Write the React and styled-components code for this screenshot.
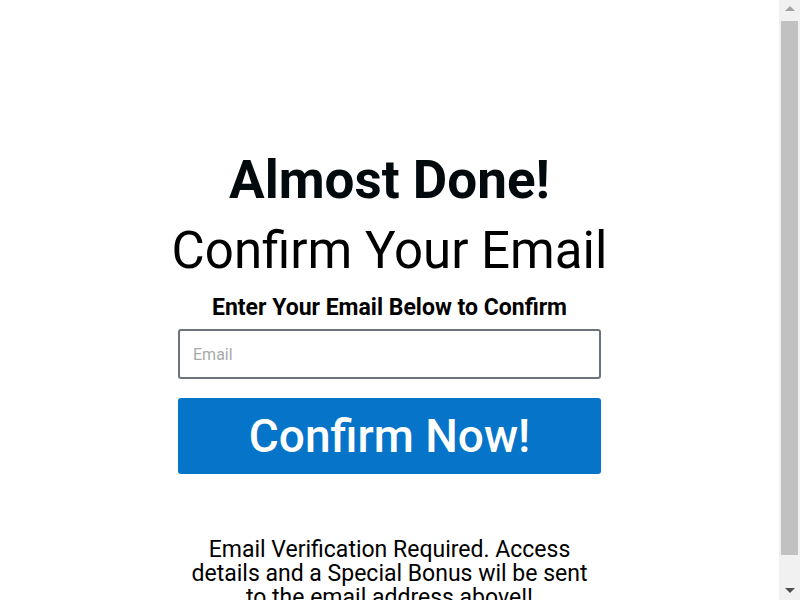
import styled, { createGlobalStyle } from "styled-components";

const Global = createGlobalStyle`
  html, body {
    margin: 0;
    padding: 0;
    background: #fff;
  }
  body {
    font-family: Roboto, "Liberation Sans", sans-serif;
    color: #000;
  }
`;

const Page = styled.main`
  display: flex;
  flex-direction: column;
  align-items: center;
  padding: 150px 21px 27px 0;
`;

const Box = styled.div`
  width: 423px;
  display: flex;
  flex-direction: column;
  align-items: center;
`;

const Title = styled.h1`
  margin: 0;
  font-size: 53px;
  font-weight: 700;
  line-height: 60px;
  color: #030a0d;
  text-align: center;
  white-space: nowrap;
`;

const Subtitle = styled.h2`
  margin: 11px 0 0;
  font-size: 51px;
  font-weight: 400;
  line-height: 60px;
  color: #000;
  text-align: center;
  white-space: nowrap;
`;

const Lead = styled.p`
  margin: 13px 0 0;
  font-size: 23px;
  font-weight: 700;
  line-height: 28px;
  text-align: center;
  white-space: nowrap;
`;

const Form = styled.form`
  width: 100%;
  display: flex;
  flex-direction: column;
  gap: 20px;
  margin-top: 7px;
`;

const Input = styled.input`
  box-sizing: border-box;
  width: 100%;
  height: 50px;
  padding: 0 13px;
  border: 2px solid #6c737c;
  border-radius: 3px;
  font-family: Roboto, "Liberation Sans", sans-serif;
  font-size: 16px;
  color: #222;
  outline: none;
  &::placeholder {
    color: #a9a9a9;
  }
`;

const Button = styled.button`
  box-sizing: border-box;
  width: 100%;
  height: 76px;
  margin-top: -1px;
  border: none;
  border-radius: 3px;
  background: #0574c9;
  color: #fff;
  font-family: Roboto, "Liberation Sans", sans-serif;
  font-size: 46px;
  font-weight: 500;
  cursor: pointer;
`;

const Note = styled.p`
  margin: 64px 0 0;
  width: 410px;
  font-size: 23px;
  font-weight: 400;
  line-height: 24px;
  text-align: center;
`;

/* browser scrollbar as seen in the screenshot */
const Scrollbar = styled.div`
  position: fixed;
  top: 0;
  right: 0;
  width: 21px;
  height: 100vh;
  background: #f1f1f1;
  display: flex;
  flex-direction: column;
`;

const Arrow = styled.div`
  height: 21px;
  flex: none;
  display: flex;
  align-items: center;
  justify-content: center;
  &::after {
    content: "";
    width: 0;
    height: 0;
    border-left: 5px solid transparent;
    border-right: 5px solid transparent;
    ${(p) =>
      p.$down
        ? "border-top: 5px solid #505050; margin-top: 2px;"
        : "border-bottom: 5px solid #a3a3a3; margin-top: -4px;"}
  }
`;

const Track = styled.div`
  flex: 1;
  padding: 0 2px;
`;

const Thumb = styled.div`
  height: 534px;
  background: #c1c1c1;
`;

export default function App() {
  return (
    <>
      <Global />
      <Page>
        <Box>
          <Title>Almost Done!</Title>
          <Subtitle>Confirm Your Email</Subtitle>
          <Lead>Enter Your Email Below to Confirm</Lead>
          <Form onSubmit={(e) => e.preventDefault()}>
            <Input type="email" placeholder="Email" />
            <Button type="submit">Confirm Now!</Button>
          </Form>
          <Note>
            Email Verification Required. Access details and a Special Bonus wil
            be sent to the email address above!!
          </Note>
        </Box>
      </Page>
      <Scrollbar>
        <Arrow />
        <Track>
          <Thumb />
        </Track>
        <Arrow $down />
      </Scrollbar>
    </>
  );
}
